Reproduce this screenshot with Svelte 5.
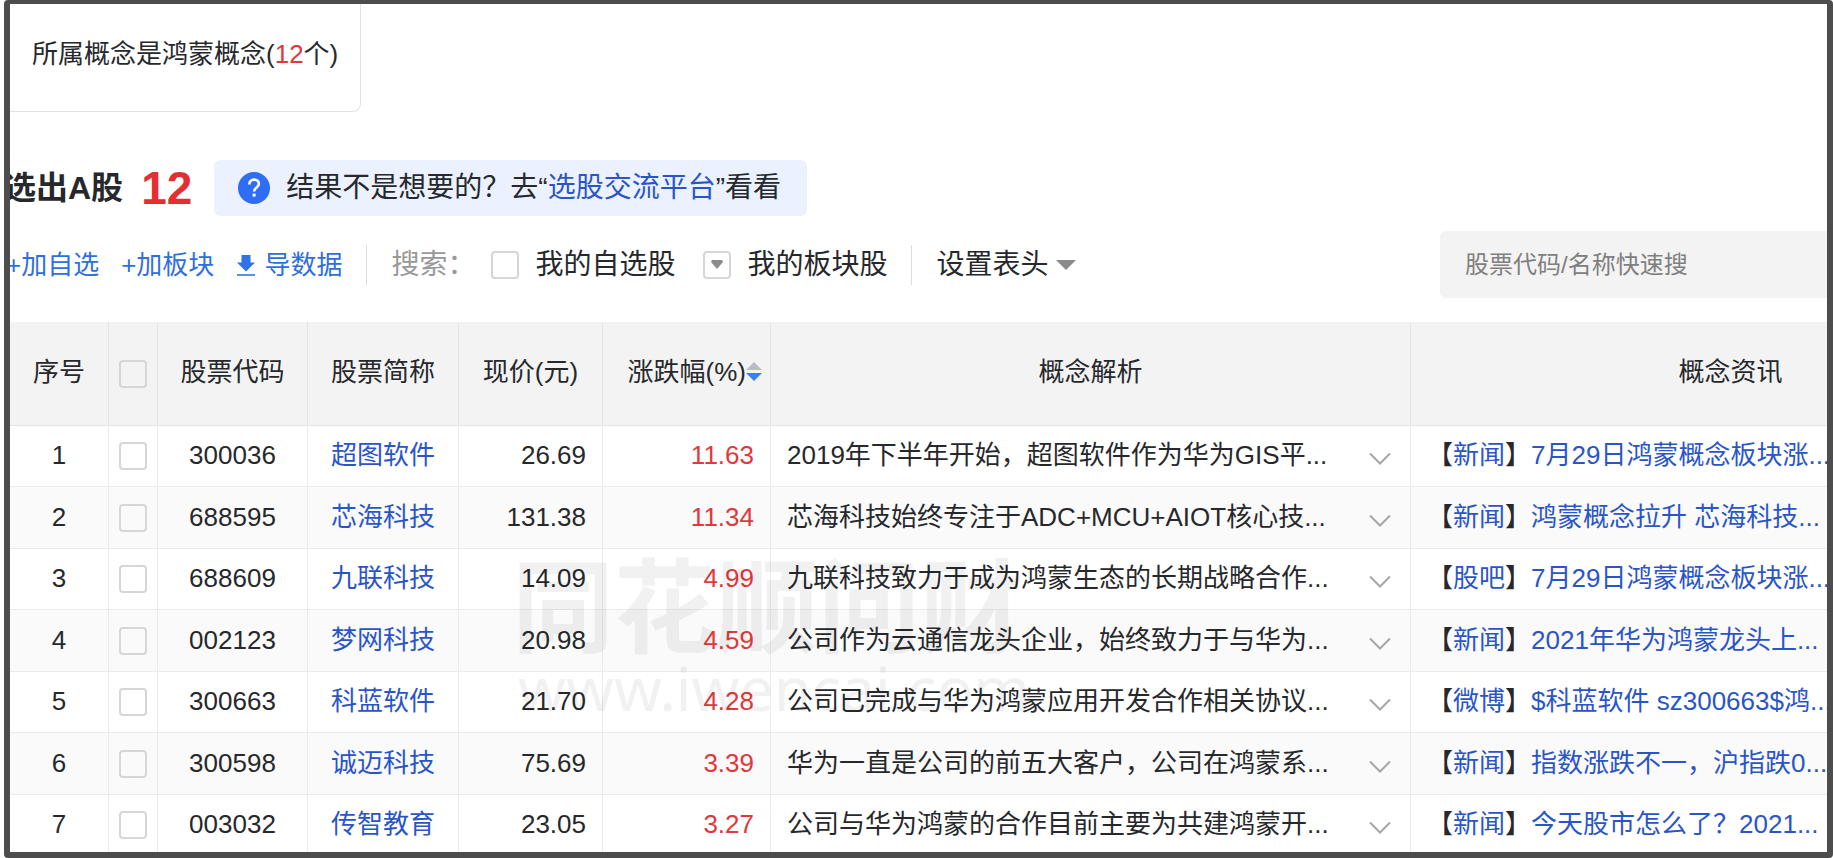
<script>
  const rows = [
    { code: '300036', name: '超图软件', price: '26.69', change: '11.63', concept: '2019年下半年开始，超图软件作为华为GIS平...', source: '新闻', news: '7月29日鸿蒙概念板块涨...' },
    { code: '688595', name: '芯海科技', price: '131.38', change: '11.34', concept: '芯海科技始终专注于ADC+MCU+AIOT核心技...', source: '新闻', news: '鸿蒙概念拉升 芯海科技...' },
    { code: '688609', name: '九联科技', price: '14.09', change: '4.99', concept: '九联科技致力于成为鸿蒙生态的长期战略合作...', source: '股吧', news: '7月29日鸿蒙概念板块涨...' },
    { code: '002123', name: '梦网科技', price: '20.98', change: '4.59', concept: '公司作为云通信龙头企业，始终致力于与华为...', source: '新闻', news: '2021年华为鸿蒙龙头上...' },
    { code: '300663', name: '科蓝软件', price: '21.70', change: '4.28', concept: '公司已完成与华为鸿蒙应用开发合作相关协议...', source: '微博', news: '$科蓝软件 sz300663$鸿...' },
    { code: '300598', name: '诚迈科技', price: '75.69', change: '3.39', concept: '华为一直是公司的前五大客户，公司在鸿蒙系...', source: '新闻', news: '指数涨跌不一，沪指跌0...' },
    { code: '003032', name: '传智教育', price: '23.05', change: '3.27', concept: '公司与华为鸿蒙的合作目前主要为共建鸿蒙开...', source: '新闻', news: '今天股市怎么了？2021...' }
  ];
</script>

<main lang="zh-CN">
  <section class="condition">所属概念是鸿蒙概念(<span class="red">12</span>个)</section>

  <header class="summary">
    <h1>选出A股</h1>
    <strong class="count">12</strong>
    <p class="hint">
      <svg width="32" height="32" viewBox="0 0 32 32" aria-hidden="true">
        <circle cx="16" cy="16" r="16" fill="#2f6df6" />
        <path d="M11.3 12.6C11.3 9.4 13.3 7.6 16.1 7.6C18.9 7.6 20.9 9.4 20.9 12C20.9 15.3 16.1 15.6 16.1 19.4" fill="none" stroke="#fff" stroke-width="2.6" />
        <rect x="14.6" y="21.6" width="3" height="3" fill="#fff" />
      </svg>
      <span>结果不是想要的？去“<a href="#platform">选股交流平台</a>”看看</span>
    </p>
  </header>

  <div class="toolbar">
    <div class="actions">
      <button type="button">+加自选</button>
      <button type="button">+加板块</button>
      <button type="button" class="export">
        <svg width="20" height="24" viewBox="0 0 20 24" aria-hidden="true">
          <path d="M5.5 2h9v7.500h4.500L10 18.500 1 9.500h4.500z" fill="#2f74e6" />
          <path d="M1 22h18" stroke="#2f74e6" stroke-width="1.600" />
        </svg>
        导数据
      </button>
    </div>
    <i class="divider"></i>
    <span class="muted">搜索：</span>
    <label class="option"><input type="checkbox" />我的自选股</label>
    <button type="button" class="option boards">
      <span class="box">
        <svg width="12" height="9" viewBox="0 0 12 9" aria-hidden="true"><path d="M1 0h10l1 2-6 7-6-7z" fill="#8c8c8c" /></svg>
      </span>
      我的板块股
    </button>
    <i class="divider"></i>
    <button type="button" class="columns">
      设置表头
      <svg width="20" height="10" viewBox="0 0 20 10" aria-hidden="true"><path d="M0 0h20L10 10z" fill="#8a8a8a" /></svg>
    </button>
    <input class="search" type="text" aria-label="股票代码/名称快速搜" placeholder="股票代码/名称快速搜" />
  </div>

  <div class="results">
    <table>
      <colgroup>
        <col class="c-index" /><col class="c-check" /><col class="c-code" /><col class="c-name" />
        <col class="c-price" /><col class="c-change" /><col /><col />
      </colgroup>
      <thead>
        <tr>
          <th>序号</th>
          <th class="check"><input type="checkbox" aria-label="全选" /></th>
          <th>股票代码</th>
          <th>股票简称</th>
          <th>现价(元)</th>
          <th class="sortable">
            <button type="button">
              涨跌幅(%)
              <svg width="16" height="20" viewBox="0 0 16 20" aria-hidden="true">
                <path d="M8 0l8 8H0z" fill="#b9bcc2" />
                <path d="M0 11h16l-8 8z" fill="#3b7ff0" />
              </svg>
            </button>
          </th>
          <th>概念解析</th>
          <th>概念资讯</th>
        </tr>
      </thead>
      <tbody>
        {#each rows as row, i}
          <tr>
            <td>{i + 1}</td>
            <td class="check"><input type="checkbox" aria-label={row.name} /></td>
            <td>{row.code}</td>
            <td><a href={'#' + row.code}>{row.name}</a></td>
            <td class="num">{row.price}</td>
            <td class="num red">{row.change}</td>
            <td>
              <div class="concept">
                <span>{row.concept}</span>
                <button type="button" aria-label="展开">
                  <svg width="22" height="14" viewBox="0 0 22 14" aria-hidden="true"><path d="M1 1.5l10 10 10-10" fill="none" stroke="#a6a6a6" stroke-width="2" /></svg>
                </button>
              </div>
            </td>
            <td class="news">【<a href={'#source-' + row.code}>{row.source}</a>】<a href={'#news-' + row.code}>{row.news}</a></td>
          </tr>
        {/each}
      </tbody>
    </table>
    <div class="watermark" aria-hidden="true">
      <b>同花顺问财</b>
      <span>www.iwencai.com</span>
    </div>
  </div>
</main>

<style>
  :global(body) {
    margin: 0;
    background: #fff;
  }

  main {
    box-sizing: border-box;
    height: 100vh;
    margin-left: 4px;
    overflow: hidden;
    border: 6px solid #4d4d4d;
    border-top-width: 4px;
    border-radius: 4px;
    background: #fff;
    color: #26282c;
    font: 26px/32px "Liberation Sans", "Noto Sans CJK SC", sans-serif;
  }

  button {
    padding: 0;
    border: 0;
    background: none;
    color: inherit;
    font: inherit;
    white-space: nowrap;
    cursor: pointer;
  }

  svg {
    display: block;
    flex: none;
  }

  a {
    color: #2a55c8;
    text-decoration: none;
  }

  .red {
    color: #e2383b;
  }

  .condition {
    width: fit-content;
    padding: 34px 22px 41px 22px;
    border: 1px solid #e2e2e2;
    border-width: 0 1px 1px 0;
    border-radius: 0 0 8px 0;
  }

  .summary {
    display: flex;
    align-items: center;
    margin: 48px 0 0 -6px;
  }

  h1 {
    margin: 0;
    font-size: 32px;
    line-height: 40px;
    white-space: nowrap;
  }

  .count {
    margin: 0 22px 0 18px;
    color: #e62e32;
    font-size: 46px;
    line-height: 56px;
  }

  .hint {
    display: flex;
    align-items: center;
    gap: 16px;
    margin: 0;
    padding: 12px 26px 12px 24px;
    border-radius: 6px;
    background: #ebf1ff;
    font-size: 28px;
    white-space: nowrap;
  }

  .toolbar {
    display: flex;
    align-items: center;
    margin: 15px 0 24px -4px;
    font-size: 28px;
    white-space: nowrap;
  }

  .actions {
    display: flex;
    gap: 22px;
    color: #2f6fdd;
    font-size: 26px;
  }

  .export {
    display: flex;
    align-items: center;
    gap: 8px;
  }

  .divider {
    width: 1px;
    height: 40px;
    margin: 0 24px;
    background: #dcdcdc;
  }

  .muted {
    color: #999;
  }

  .option {
    display: flex;
    align-items: center;
    gap: 16px;
    margin-left: 16px;
  }

  .boards {
    margin-left: 28px;
  }

  .columns {
    display: flex;
    align-items: center;
    gap: 8px;
  }

  input[type="checkbox"],
  .box {
    box-sizing: border-box;
    display: block;
    width: 28px;
    height: 28px;
    margin: 0;
    border: 2px solid #d6d6d6;
    border-radius: 4px;
    appearance: none;
  }

  .box {
    display: grid;
    place-items: center;
  }

  .search {
    box-sizing: border-box;
    width: 387px;
    height: 67px;
    margin-left: auto;
    padding: 0 25px;
    border: 0;
    border-radius: 6px 0 0 6px;
    background: #f3f3f3;
    color: #333;
    font: 24px/32px "Liberation Sans", "Noto Sans CJK SC", sans-serif;
  }

  .search::placeholder {
    color: #808080;
    opacity: 1;
  }

  .results {
    position: relative;
  }

  table {
    width: calc(100% + 224px);
    border-collapse: separate;
    border-spacing: 0;
    table-layout: fixed;
    white-space: nowrap;
  }

  .c-index { width: 99px; }
  .c-check { width: 49px; }
  .c-code { width: 150px; }
  .c-name { width: 151px; }
  .c-price { width: 144px; }
  .c-change { width: 168px; }

  th,
  td {
    box-sizing: border-box;
    padding: 0 0 2px;
    border: 1px solid #ebebeb;
    border-width: 0 1px 1px 0;
    text-align: center;
    font-weight: 400;
  }

  th {
    height: 104px;
    padding-bottom: 4px;
    border-color: #e4e4e4;
    background: #f3f3f3;
  }

  td {
    height: 61px;
  }

  .check {
    padding: 0;
  }

  tr:nth-child(even) td {
    height: 62px;
    background: #fafafa;
  }

  th input[type="checkbox"],
  td input[type="checkbox"] {
    margin: 0 auto;
  }

  .sortable button {
    display: flex;
    align-items: center;
    margin: 0 8px 0 auto;
  }

  td.num {
    padding-right: 16px;
    text-align: right;
  }

  .concept {
    display: flex;
    align-items: center;
    justify-content: space-between;
    padding: 0 19px 0 16px;
  }

  .concept button {
    padding-top: 8px;
  }

  td.news {
    padding-left: 16px;
    text-align: left;
  }

  .watermark {
    position: absolute;
    top: 230px;
    left: 502px;
    display: flex;
    flex-direction: column;
    color: #000;
    opacity: 0.05;
    white-space: nowrap;
    pointer-events: none;
  }

  .watermark b {
    font-size: 102px;
    font-weight: 600;
    line-height: 116px;
  }

  .watermark span {
    padding-left: 6px;
    font: 61px/40px "Noto Sans", sans-serif;
  }
</style>
